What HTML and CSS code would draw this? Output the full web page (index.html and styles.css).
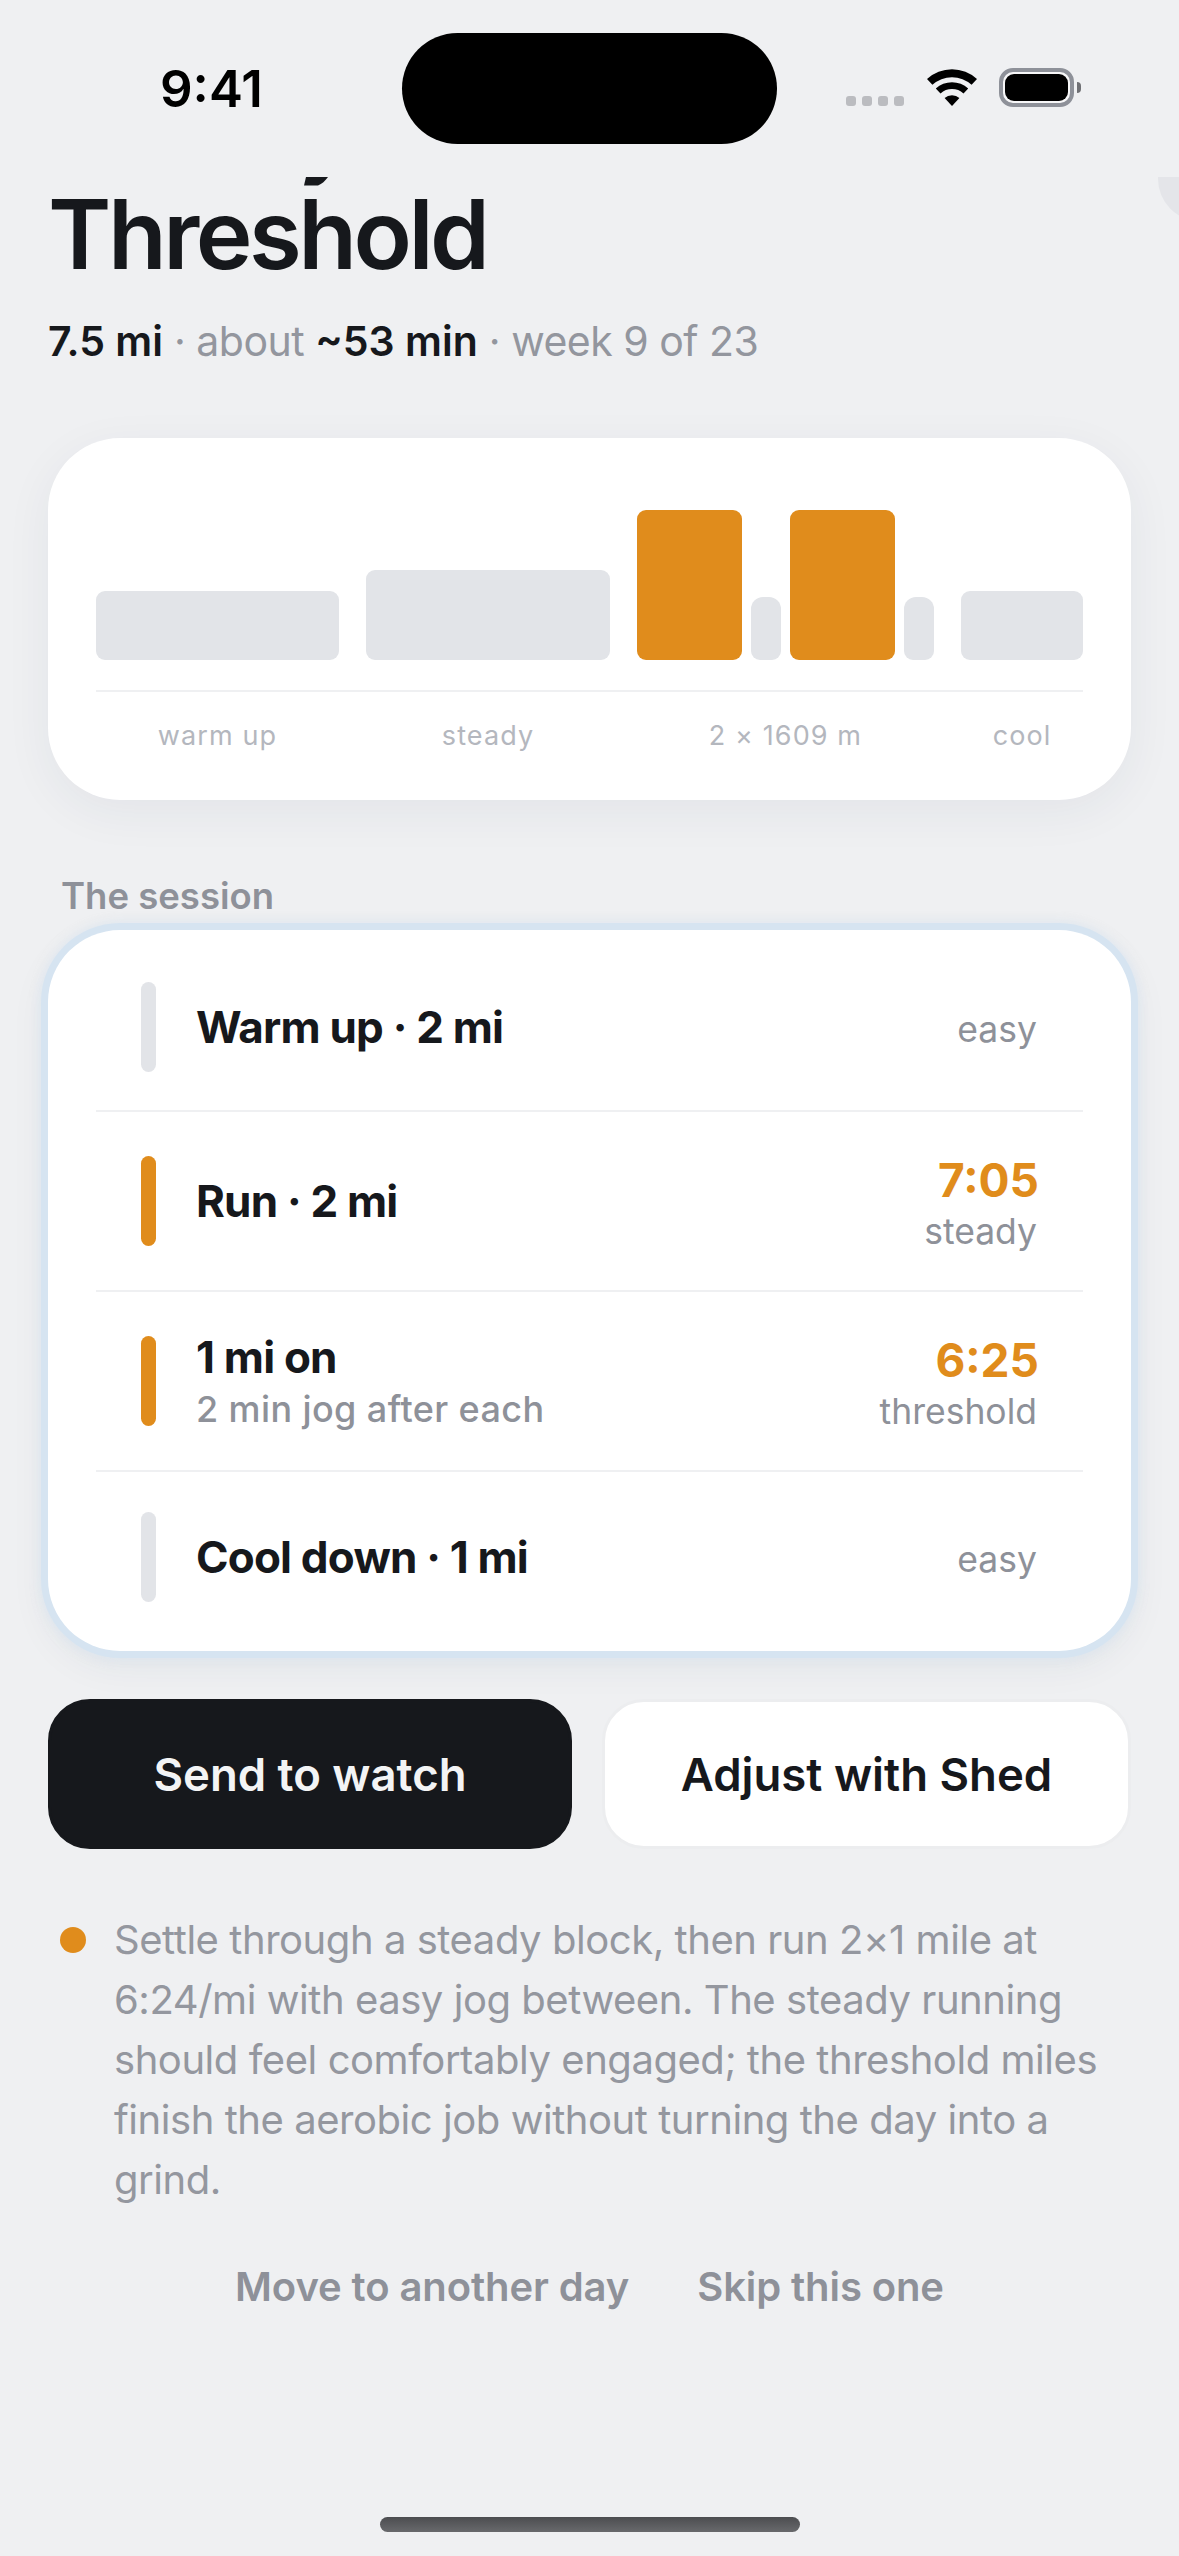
FILE: index.html
```html
<!DOCTYPE html>
<html lang="en">
<head>
    <meta charset="UTF-8">
    <meta name="viewport" content="width=device-width, initial-scale=1.0">
    <title>Threshold</title>
    <link rel="stylesheet" href="styles.css">
</head>
<body>
    <div class="phone">
        <!-- Status bar -->
        <div class="status-bar">
            <div class="time">9:41</div>
            <div class="island"></div>
            <div class="status-icons">
                <div class="signal"><span></span><span></span><span></span><span></span></div>
                <svg class="wifi" width="50" height="37" viewBox="0 0 50 37">
                    <path d="M0 10A37 37 0 0 1 50 10L44.6 15.8A29 29 0 0 0 5.4 15.8Z"/>
                    <path d="M8.8 19.5A24 24 0 0 1 41.2 19.5L36.5 24.6A17 17 0 0 0 13.5 24.6Z"/>
                    <path d="M17.6 29A11 11 0 0 1 32.4 29L25 37Z"/>
                </svg>
                <div class="battery"><div class="battery-fill"></div></div>
                <div class="battery-nub"></div>
            </div>
        </div>

        <div class="scroll">
            <!-- Bits of what has scrolled under the status bar -->
            <svg class="tail" width="24" height="9" viewBox="0 0 24 9">
                <path d="M2 0H24C21 4 18 7 14 8.500H0Z"/>
            </svg>
            <div class="round-btn"></div>

            <h1>Threshold</h1>
            <p class="meta"><b>7.5 mi</b> · about <b>~53 min</b> · week 9 of 23</p>

            <!-- Chart -->
            <div class="card chart">
                <div class="bars">
                    <div class="group group-warm"><div class="bar bar-warm"></div></div>
                    <div class="group group-steady"><div class="bar bar-steady"></div></div>
                    <div class="group group-reps">
                        <div class="bar bar-rep"></div>
                        <div class="bar bar-jog"></div>
                        <div class="bar bar-rep"></div>
                        <div class="bar bar-jog"></div>
                    </div>
                    <div class="group group-cool"><div class="bar bar-warm"></div></div>
                </div>
                <div class="labels">
                    <div class="group-warm">warm up</div>
                    <div class="group-steady">steady</div>
                    <div class="group-reps">2 × 1609 m</div>
                    <div class="group-cool">cool</div>
                </div>
            </div>

            <h2>The session</h2>

            <!-- Session -->
            <div class="card session">
                <div class="row">
                    <div class="tick"></div>
                    <div class="row-main"><div class="row-title">Warm up · 2 mi</div></div>
                    <div class="row-side"><div class="row-small">easy</div></div>
                </div>
                <div class="row">
                    <div class="tick tick-hot"></div>
                    <div class="row-main"><div class="row-title">Run · 2 mi</div></div>
                    <div class="row-side">
                        <div class="pace">7:05</div>
                        <div class="row-small">steady</div>
                    </div>
                </div>
                <div class="row">
                    <div class="tick tick-hot"></div>
                    <div class="row-main">
                        <div class="row-title">1 mi on</div>
                        <div class="row-small">2 min jog after each</div>
                    </div>
                    <div class="row-side">
                        <div class="pace">6:25</div>
                        <div class="row-small">threshold</div>
                    </div>
                </div>
                <div class="row">
                    <div class="tick"></div>
                    <div class="row-main"><div class="row-title">Cool down · 1 mi</div></div>
                    <div class="row-side"><div class="row-small">easy</div></div>
                </div>
            </div>

            <div class="actions">
                <button class="btn btn-dark">Send to watch</button>
                <button class="btn btn-light">Adjust with Shed</button>
            </div>

            <div class="note">
                <div class="note-dot"></div>
                <p>Settle through a steady block, then run 2×1 mile at 6:24/mi with easy jog between. The steady running should feel comfortably engaged; the threshold miles finish the aerobic job without turning the day into a grind.</p>
            </div>

            <div class="links">
                <span>Move to another day</span>
                <span>Skip this one</span>
            </div>
        </div>

        <div class="home-bar"></div>
    </div>
</body>
</html>
```

FILE: styles.css
```css
body {
    font-family: Inter, "Noto Sans", sans-serif;
    margin: 0;
    background-color: #eff0f2;
    color: #16181c;
}
.phone {
    width: 1179px;
    height: 2556px;
    overflow: hidden;
    position: relative;
}
.status-bar {
    height: 177px;
    box-sizing: border-box;
    padding-top: 33px;
    display: flex;
    align-items: flex-start;
}
.time {
    width: 402px;
    box-sizing: border-box;
    padding: 26px 0 0 160px;
    font-size: 51px;
    line-height: 60px;
    font-weight: 600;
    color: #000;
}
.island {
    width: 375px;
    height: 111px;
    border-radius: 56px;
    background-color: #000;
}
.status-icons {
    display: flex;
    align-items: flex-end;
    padding: 35px 0 0 69px;
}
.signal {
    display: flex;
    gap: 6px;
    margin-right: 23px;
}
.signal span {
    width: 10px;
    height: 10px;
    border-radius: 3px;
    background-color: #bbbcc0;
}
.wifi {
    fill: #000;
    margin-right: 22px;
}
.battery {
    width: 75px;
    height: 39px;
    box-sizing: border-box;
    border: 4px solid #8e9199;
    border-radius: 14px;
    padding: 2px;
    margin-bottom: -1px;
    background-color: #f7f7f8;
}
.battery-fill {
    height: 100%;
    border-radius: 9px;
    background-color: #000;
}
.battery-nub {
    width: 4px;
    height: 11px;
    margin: 0 0 13px 3px;
    border-radius: 0 4px 4px 0;
    background-color: #6f7074;
}
.scroll {
    height: 2300px;
    overflow: hidden;
    position: relative;
    padding: 0 48px;
}
.tail {
    position: absolute;
    left: 304px;
    top: 0;
    fill: #16181c;
}
.round-btn {
    position: absolute;
    left: 1158px;
    top: -40px;
    width: 84px;
    height: 84px;
    border-radius: 50%;
    background-color: #e4e5e9;
}
h1 {
    margin: 0;
    font-size: 96px;
    line-height: 114px;
    font-weight: 600;
    letter-spacing: -3.5px;
}
.meta {
    margin: 0;
    padding-top: 20px;
    font-size: 41px;
    line-height: 60px;
    letter-spacing: -0.5px;
    color: #93969e;
}
.meta b {
    font-weight: 600;
    letter-spacing: 0;
    color: #16181c;
}
.card {
    background-color: white;
    border-radius: 72px;
}
.chart {
    margin-top: 67px;
    height: 362px;
    box-sizing: border-box;
    padding: 72px 48px 0;
    box-shadow: 0 12px 48px rgba(30, 50, 80, 0.06);
}
.bars {
    display: flex;
    align-items: flex-end;
    gap: 27px;
    height: 150px;
    padding-bottom: 30px;
    border-bottom: 2px solid #eff0f2;
}
.labels {
    display: flex;
    gap: 27px;
    padding-top: 27px;
    font-size: 27px;
    line-height: 34px;
    letter-spacing: 1.1px;
    text-align: center;
    color: #b4b7be;
}
.group {
    display: flex;
    align-items: flex-end;
    gap: 9px;
}
.group-warm {
    width: 243px;
}
.group-steady {
    width: 244px;
}
.group-reps {
    width: 297px;
}
.group-cool {
    width: 122px;
}
.bar {
    border-radius: 9px;
    background-color: #e2e4e8;
}
.bar-warm {
    width: 100%;
    height: 69px;
}
.bar-steady {
    width: 100%;
    height: 90px;
}
.bar-rep {
    width: 105px;
    height: 150px;
    background-color: #e08c1c;
}
.bar-jog {
    width: 30px;
    height: 63px;
    border-radius: 12px 12px 9px 9px;
}
h2 {
    margin: 0;
    padding: 73px 0 0 13px;
    font-size: 36.500px;
    line-height: 46px;
    font-weight: 600;
    color: #8e9199;
}
.session {
    margin-top: 11px;
    height: 721px;
    box-sizing: border-box;
    padding: 14px 48px 9px;
    box-shadow: 0 0 0 7px #d6e4f1, 0 0 8px 9px rgba(214, 228, 241, 0.5), 0 12px 40px rgba(30, 50, 80, 0.07);
}
.row {
    height: 180px;
    box-sizing: border-box;
    padding: 0 46px 0 45px;
    display: flex;
    align-items: center;
    border-bottom: 2px solid #eff0f2;
}
.row:first-child {
    height: 168px;
}
.row:last-child {
    height: 170px;
    border-bottom: none;
}
.tick {
    width: 15px;
    height: 90px;
    border-radius: 8px;
    background-color: #e2e4e8;
    margin-right: 40px;
}
.tick-hot {
    background-color: #e08c1c;
}
.row-main {
    flex: 1;
}
.row-title {
    font-size: 44px;
    line-height: 52px;
    font-weight: 650;
    letter-spacing: -0.8px;
}
.row-small {
    font-size: 35.500px;
    line-height: 46px;
    font-weight: 400;
    color: #8e9199;
}
.row-main .row-small {
    margin-top: 3px;
    font-size: 36px;
    font-weight: 500;
    letter-spacing: 0.4px;
}
.row-side {
    padding-top: 5px;
    text-align: right;
}
.pace {
    margin: 0 -2px 2px 0;
    font-size: 46px;
    line-height: 54px;
    font-weight: 700;
    color: #e08c1c;
}
.actions {
    display: flex;
    gap: 30px;
    margin-top: 48px;
}
.btn {
    height: 150px;
    padding: 0;
    border: 3px solid #16181c;
    border-radius: 42px;
    font-family: inherit;
    font-size: 45.500px;
    font-weight: 600;
    cursor: pointer;
}
.btn-dark {
    width: 524px;
    background-color: #16181c;
    color: #f3f4f5;
}
.btn-light {
    flex: 1;
    background-color: white;
    border-color: #ecedef;
    color: #16181c;
}
.note {
    display: flex;
    margin-top: 61px;
    padding-left: 12px;
}
.note-dot {
    width: 26px;
    height: 26px;
    flex-shrink: 0;
    margin: 17px 28px 0 0;
    border-radius: 50%;
    background-color: #e08c1c;
}
.note p {
    margin: 0;
    width: 1000px;
    font-size: 40px;
    line-height: 60px;
    letter-spacing: -0.45px;
    color: #94979f;
}
.links {
    display: flex;
    justify-content: center;
    gap: 68px;
    margin-top: 52px;
    font-size: 40px;
    line-height: 50px;
    font-weight: 600;
    letter-spacing: -0.1px;
    color: #8e9199;
}
.home-bar {
    position: absolute;
    left: 380px;
    top: 2517px;
    width: 420px;
    height: 15px;
    border-radius: 8px;
    background: linear-gradient(#4c4d50, #68696c);
}
```
